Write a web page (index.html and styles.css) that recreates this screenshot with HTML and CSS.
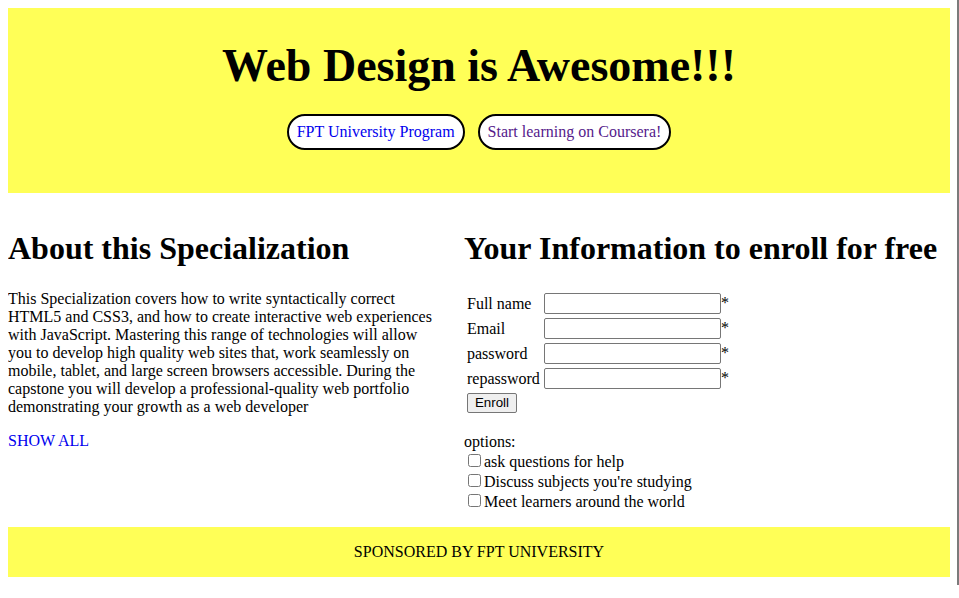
FILE: index.html
```html
<!DOCTYPE html>
<html lang="en">
<head>
<meta charset="utf-8">
<title>Web Design is Awesome!!!</title>
<link rel="stylesheet" href="styles.css">
</head>
<body>
<header class="hero">
  <h1 class="hero-title">Web Design is Awesome!!!</h1>
  <nav class="hero-links">
    <a class="pill" href="#fpt">FPT University Program</a>
    <a class="pill pill-visited" href="#coursera">Start learning on Coursera!</a>
  </nav>
</header>
<main class="columns">
  <section class="about">
    <h2 class="section-title">About this Specialization</h2>
    <p class="about-text">This Specialization covers how to write syntactically correct HTML5 and CSS3, and how to create interactive web experiences with JavaScript. Mastering this range of technologies will allow you to develop high quality web sites that, work seamlessly on mobile, tablet, and large screen browsers accessible. During the capstone you will develop a professional-quality web portfolio demonstrating your growth as a web developer</p>
    <p class="about-more"><a class="link" href="#all">SHOW ALL</a></p>
  </section>
  <section class="enroll">
    <h2 class="section-title">Your Information to enroll for free</h2>
    <form class="enroll-form">
      <table class="enroll-table">
        <tr><td>Full name</td><td><input class="field" type="text">*</td></tr>
        <tr><td>Email</td><td><input class="field" type="text">*</td></tr>
        <tr><td>password</td><td><input class="field" type="password">*</td></tr>
        <tr><td>repassword</td><td><input class="field" type="password">*</td></tr>
        <tr><td colspan="2"><button class="btn" type="button">Enroll</button></td></tr>
      </table>
      <p class="options">options:<br>
        <label><input class="check" type="checkbox">ask questions for help</label><br>
        <label><input class="check" type="checkbox">Discuss subjects you're studying</label><br>
        <label><input class="check" type="checkbox">Meet learners around the world</label>
      </p>
    </form>
  </section>
</main>
<footer class="footer">SPONSORED BY FPT UNIVERSITY</footer>
</body>
</html>
```
FILE: styles.css
```css
html {
  border-right: 2px solid #7b7b7b;
  background: #fff;
}
body {
  margin: 8px 7px 8px 8px;
  font-family: "Liberation Serif", "Times New Roman", serif;
  font-size: 16px;
  line-height: 18px;
  color: #000;
}
.hero {
  background: #ffff57;
  padding: 31px 0 43px;
  text-align: center;
}
.hero-title {
  margin: 0 0 22px;
  font-size: 46px;
  line-height: 53px;
  font-weight: bold;
}
.hero-links {
  display: flex;
  justify-content: center;
  gap: 13px;
}
.pill {
  display: block;
  padding: 7px 8px;
  line-height: 18px;
  border: 2px solid #000;
  border-radius: 20px;
  background: #fff;
  color: #0000ee;
  text-decoration: none;
}
.pill-visited {
  color: #551a8b;
}
.columns {
  display: grid;
  grid-template-columns: 436px 1fr;
  column-gap: 20px;
  padding-top: 37px;
}
.section-title {
  margin: 0 0 23px;
  font-size: 32px;
  line-height: 37px;
  font-weight: bold;
}
.about-text {
  margin: 0 0 16px;
}
.about-more {
  margin: 0;
}
.link {
  color: #0000ee;
  text-decoration: none;
}
.enroll-form {
  margin: 0;
}
.enroll-table {
  border-spacing: 2px;
  margin: 0;
}
.enroll-table td {
  padding: 1px;
}
.field {
  box-sizing: border-box;
  width: 177px;
  height: 21px;
  margin: 0;
  padding: 1px 2px;
  border: 1px solid #767676;
  border-radius: 2px;
  font-family: "Liberation Sans", Arial, sans-serif;
  font-size: 13.33px;
  vertical-align: baseline;
}
.btn {
  box-sizing: border-box;
  width: 50px;
  height: 20px;
  margin: 0;
  padding: 1px 6px;
  border: 1px solid #767676;
  border-radius: 2px;
  background: #efefef;
  color: #000;
  font-family: "Liberation Sans", Arial, sans-serif;
  font-size: 13.33px;
  line-height: 16px;
}
.options {
  margin: 16px 0 15px;
  line-height: 20px;
}
.check {
  margin: 2px 3px 3px 4px;
  width: 13px;
  height: 13px;
  vertical-align: baseline;
}
.footer {
  background: #ffff57;
  padding: 16px 0;
  text-align: center;
}
```
